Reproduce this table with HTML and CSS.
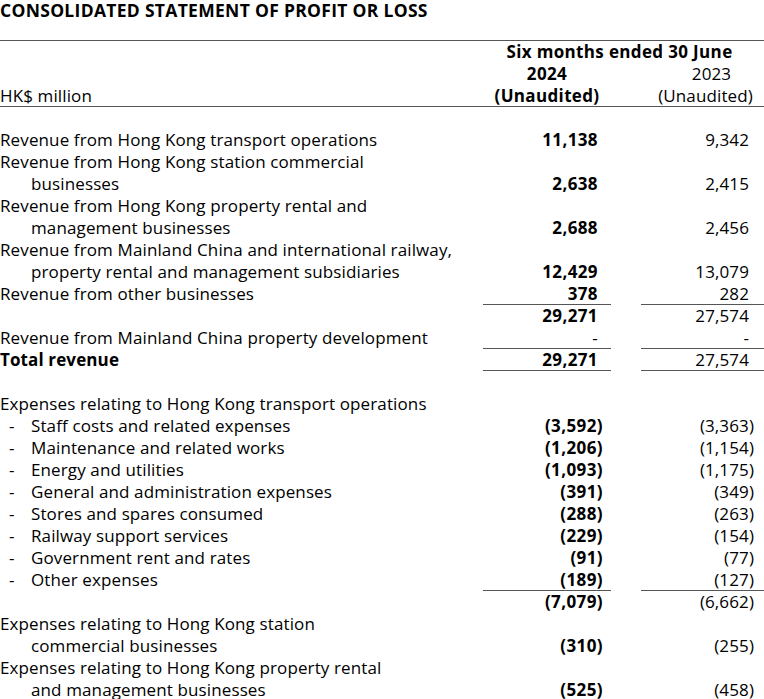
FILE: index.html
```html
<!DOCTYPE html>
<html lang="en">
<head>
<meta charset="utf-8">
<title>Consolidated Statement of Profit or Loss</title>
<link rel="stylesheet" href="styles.css">
</head>
<body>
<h1 class="title">CONSOLIDATED STATEMENT OF PROFIT OR LOSS</h1>
<table class="stmt">
  <colgroup>
    <col class="c-label">
    <col class="c-cur">
    <col class="c-gap">
    <col class="c-prev">
  </colgroup>
  <thead>
    <tr><th></th><th colspan="3" class="period">Six months ended 30 June</th></tr>
    <tr><th></th><th class="hcur">2024</th><th></th><th class="hprev hyear">2023</th></tr>
    <tr class="hlast"><th class="unit">HK$ million</th><th class="hcur">(Unaudited)</th><th></th><th class="hprev">(Unaudited)</th></tr>
  </thead>
  <tbody>
    <tr class="blank"><td colspan="4"></td></tr>
    <tr><td>Revenue from Hong Kong transport operations</td><td class="cur">11,138</td><td></td><td class="prev">9,342</td></tr>
    <tr><td>Revenue from Hong Kong station commercial</td><td class="cur"></td><td></td><td class="prev"></td></tr>
    <tr><td class="ind">businesses</td><td class="cur">2,638</td><td></td><td class="prev">2,415</td></tr>
    <tr><td>Revenue from Hong Kong property rental and</td><td class="cur"></td><td></td><td class="prev"></td></tr>
    <tr><td class="ind">management businesses</td><td class="cur">2,688</td><td></td><td class="prev">2,456</td></tr>
    <tr><td>Revenue from Mainland China and international railway,</td><td class="cur"></td><td></td><td class="prev"></td></tr>
    <tr><td class="ind">property rental and management subsidiaries</td><td class="cur">12,429</td><td></td><td class="prev">13,079</td></tr>
    <tr class="rule"><td>Revenue from other businesses</td><td class="cur">378</td><td></td><td class="prev">282</td></tr>
    <tr><td></td><td class="cur">29,271</td><td></td><td class="prev">27,574</td></tr>
    <tr class="rule"><td>Revenue from Mainland China property development</td><td class="cur nil">-</td><td></td><td class="prev">-</td></tr>
    <tr class="rule total"><td>Total revenue</td><td class="cur">29,271</td><td></td><td class="prev">27,574</td></tr>
    <tr class="blank"><td colspan="4"></td></tr>
    <tr><td>Expenses relating to Hong Kong transport operations</td><td class="cur"></td><td></td><td class="prev"></td></tr>
    <tr><td><span class="dash">-</span>Staff costs and related expenses</td><td class="cur">(3,592<span class="cp">)</span></td><td></td><td class="prev">(3,363<span class="cp">)</span></td></tr>
    <tr><td><span class="dash">-</span>Maintenance and related works</td><td class="cur">(1,206<span class="cp">)</span></td><td></td><td class="prev">(1,154<span class="cp">)</span></td></tr>
    <tr><td><span class="dash">-</span>Energy and utilities</td><td class="cur">(1,093<span class="cp">)</span></td><td></td><td class="prev">(1,175<span class="cp">)</span></td></tr>
    <tr><td><span class="dash">-</span>General and administration expenses</td><td class="cur">(391<span class="cp">)</span></td><td></td><td class="prev">(349<span class="cp">)</span></td></tr>
    <tr><td><span class="dash">-</span>Stores and spares consumed</td><td class="cur">(288<span class="cp">)</span></td><td></td><td class="prev">(263<span class="cp">)</span></td></tr>
    <tr><td><span class="dash">-</span>Railway support services</td><td class="cur">(229<span class="cp">)</span></td><td></td><td class="prev">(154<span class="cp">)</span></td></tr>
    <tr><td><span class="dash">-</span>Government rent and rates</td><td class="cur">(91<span class="cp">)</span></td><td></td><td class="prev">(77<span class="cp">)</span></td></tr>
    <tr class="rule"><td><span class="dash">-</span>Other expenses</td><td class="cur">(189<span class="cp">)</span></td><td></td><td class="prev">(127<span class="cp">)</span></td></tr>
    <tr><td></td><td class="cur">(7,079<span class="cp">)</span></td><td></td><td class="prev">(6,662<span class="cp">)</span></td></tr>
    <tr><td>Expenses relating to Hong Kong station</td><td class="cur"></td><td></td><td class="prev"></td></tr>
    <tr><td class="ind">commercial businesses</td><td class="cur">(310<span class="cp">)</span></td><td></td><td class="prev">(255<span class="cp">)</span></td></tr>
    <tr><td>Expenses relating to Hong Kong property rental</td><td class="cur"></td><td></td><td class="prev"></td></tr>
    <tr><td class="ind">and management businesses</td><td class="cur">(525<span class="cp">)</span></td><td></td><td class="prev">(458<span class="cp">)</span></td></tr>
  </tbody>
</table>
</body>
</html>
```

FILE: styles.css
```css
html, body {
  margin: 0;
  padding: 0;
  background: #ffffff;
}

body {
  font-family: "Open Sans", "Noto Sans", sans-serif;
  color: #000000;
  font-size: 17px;
  font-weight: 400;
  letter-spacing: 0.12px;
  width: 764px;
}

.title {
  margin: 0;
  padding: 0;
  font-size: 17.5px;
  line-height: 20px;
  font-weight: 700;
  letter-spacing: 0.3px;
  height: 40px;
}

.stmt {
  width: 764px;
  border-collapse: collapse;
  table-layout: fixed;
  box-shadow: inset 0 1px 0 #555555;
}

.c-label { width: 483px; }
.c-cur { width: 128px; }
.c-gap { width: 30px; }
.c-prev { width: 123px; }

.stmt th,
.stmt td {
  padding: 0;
  height: 22px;
  line-height: 22px;
  white-space: nowrap;
  vertical-align: middle;
  text-align: left;
}

.stmt thead tr:first-child th {
  padding-top: 1px;
}

.stmt th {
  font-weight: 400;
}

.stmt .period {
  font-weight: 700;
  text-align: center;
  padding-right: 8px;
  letter-spacing: 0.35px;
}

.stmt .hcur {
  font-weight: 700;
  text-align: center;
  letter-spacing: 0.35px;
}

.stmt .hprev {
  text-align: center;
  padding-left: 6px;
}

.stmt .hyear {
  padding-left: 18px;
}

.hlast th {
  box-shadow: inset 0 -1px 0 #555555;
}

.stmt .cur {
  font-weight: 700;
  text-align: right;
  padding-right: 13px;
  letter-spacing: 0.4px;
}

.stmt .cur.nil {
  font-weight: 400;
}

.stmt .prev {
  text-align: right;
  padding-right: 15px;
}

.cp {
  margin-right: -5px;
}

.stmt .ind {
  padding-left: 31px;
}

.dash {
  display: inline-block;
  width: 22px;
  padding-left: 9px;
}

.rule .cur,
.rule .prev {
  box-shadow: inset 0 -1px 0 #555555;
}

.total td:first-child {
  font-weight: 700;
}
```
